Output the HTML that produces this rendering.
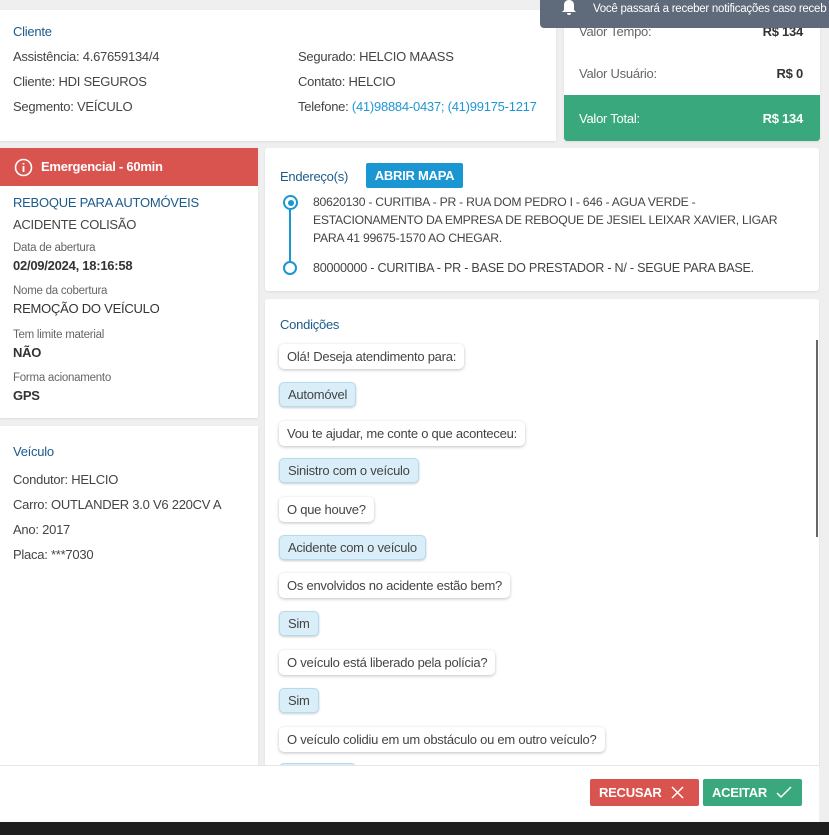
<!DOCTYPE html>
<html><head><meta charset="utf-8"><style>
*{box-sizing:border-box;margin:0;padding:0}
body{width:829px;height:835px;background:#efefef;font-family:"Liberation Sans",sans-serif;font-size:13px;letter-spacing:-0.25px;color:#444;position:relative;overflow:hidden}
.card{position:absolute;background:#fff;box-shadow:0 1px 2px rgba(0,0,0,.08)}
.t{position:absolute;white-space:nowrap}
.h{color:#1c5b8a}
.lnk{color:#1f97d4}
.lbl{font-size:11.5px;color:#666}
.b{color:#333}
.bub{position:absolute;left:279px;height:25px;line-height:25px;padding:0 8px;border-radius:5px;background:#fff;box-shadow:0 1px 3px rgba(0,0,0,.25);color:#444;white-space:nowrap}
.u{background:#d9eef8;box-shadow:0 1px 2px rgba(0,0,0,.2);border:1px solid #b4dcee;line-height:23px}
.btn{position:absolute;height:27px;top:779px;color:#fff;font-weight:bold;line-height:27px;padding-left:9px;border-radius:2px;font-size:13px}
</style></head><body>
<div class="card" style="left:0;top:10px;width:556px;height:131px">
<div class="t h" style="left:13px;top:14px">Cliente</div>
<div class="t" style="left:13px;top:39px">Assistência: 4.67659134/4</div>
<div class="t" style="left:13px;top:64px">Cliente: HDI SEGUROS</div>
<div class="t" style="left:13px;top:89px">Segmento: VEÍCULO</div>
<div class="t" style="left:298px;top:39px">Segurado: HELCIO MAASS</div>
<div class="t" style="left:298px;top:64px">Contato: HELCIO</div>
<div class="t" style="left:298px;top:89px">Telefone: <span class="lnk">(41)98884-0437; (41)99175-1217</span></div>
</div>
<div class="card" style="left:564px;top:10px;width:256px;height:131px">
<div class="t" style="left:15px;top:14px;color:#666">Valor Tempo:</div>
<div class="t" style="right:17px;top:14px;font-weight:bold;color:#333">R$ 134</div>
<div class="t" style="left:15px;top:56px;color:#666">Valor Usuário:</div>
<div class="t" style="right:17px;top:56px;font-weight:bold;color:#333">R$ 0</div>
<div style="position:absolute;left:0;top:85px;width:256px;height:46px;background:#39a97d;border-radius:0 0 3px 3px"></div>
<div class="t" style="left:15px;top:101px;color:#fff">Valor Total:</div>
<div class="t" style="right:17px;top:101px;color:#fff;font-weight:bold">R$ 134</div>
</div>
<div style="position:absolute;left:540px;top:0;width:289px;height:28px;background:#5f6b7a;border-radius:0 0 0 4px;color:#fff;font-size:11.5px">
<svg style="position:absolute;left:22px;top:0" width="14" height="16" viewBox="0 0 14 16"><path d="M7 0c-3 0-5 2-5 5v5l-2 2h14l-2-2V5c0-3-2-5-5-5zM5 13h4a2 2 0 0 1-4 0z" fill="#fff"/></svg>
<div class="t" style="left:53px;top:3px">Você passará a receber notificações caso receb</div></div>

<div class="card" style="left:0;top:148px;width:258px;height:270px">
<div style="position:absolute;left:0;top:0;width:258px;height:38px;background:#d9534f"></div>
<svg style="position:absolute;left:14px;top:10px" width="19" height="19" viewBox="0 0 19 19"><circle cx="9.5" cy="9.5" r="8" fill="none" stroke="#fff" stroke-width="1.6"/><path d="M9.5 8v6M9.5 5v1.5" stroke="#fff" stroke-width="1.8"/></svg>
<div class="t" style="left:41px;top:11px;color:#fff;font-weight:bold">Emergencial - 60min</div>
<div class="t h" style="left:13px;top:47px">REBOQUE PARA AUTOMÓVEIS</div>
<div class="t" style="left:13px;top:69px">ACIDENTE COLISÃO</div>
<div class="t lbl" style="left:13px;top:94px">Data de abertura</div>
<div class="t b" style="left:13px;top:110px;font-weight:bold">02/09/2024, 18:16:58</div>
<div class="t lbl" style="left:13px;top:137px">Nome da cobertura</div>
<div class="t b" style="left:13px;top:153px">REMOÇÃO DO VEÍCULO</div>
<div class="t lbl" style="left:13px;top:181px">Tem limite material</div>
<div class="t b" style="left:13px;top:197px;font-weight:bold">NÃO</div>
<div class="t lbl" style="left:13px;top:224px">Forma acionamento</div>
<div class="t b" style="left:13px;top:240px;font-weight:bold">GPS</div>
</div>
<div class="card" style="left:0;top:426px;width:258px;height:340px">
<div class="t h" style="left:13px;top:18px">Veículo</div>
<div class="t" style="left:13px;top:46px">Condutor: HELCIO</div>
<div class="t" style="left:13px;top:71px">Carro: OUTLANDER 3.0 V6 220CV A</div>
<div class="t" style="left:13px;top:96px">Ano: 2017</div>
<div class="t" style="left:13px;top:121px">Placa: ***7030</div>
</div>

<div class="card" style="left:265px;top:148px;width:554px;height:143px;border-radius:3px">
<div class="t h" style="left:15px;top:21px">Endereço(s)</div>
<div style="position:absolute;left:101px;top:15px;width:97px;height:25px;background:#1a96d3;border-radius:2px;color:#fff;font-weight:bold;line-height:25px;text-align:center">ABRIR MAPA</div>
<div style="position:absolute;left:24px;top:56px;width:2px;height:62px;background:#1a96d3"></div>
<div style="position:absolute;left:18px;top:47px;width:15px;height:15px;border:2px solid #1a96d3;border-radius:50%;background:#fff"><div style="position:absolute;left:2.5px;top:2.5px;width:6px;height:6px;border-radius:50%;background:#1a96d3"></div></div>
<div style="position:absolute;left:18px;top:113px;width:14px;height:14px;border:2px solid #1a96d3;border-radius:50%;background:#fff"></div>
<div style="position:absolute;left:48px;top:45px;width:505px;line-height:18px;font-size:12.2px;white-space:nowrap">80620130 - CURITIBA - PR - RUA DOM PEDRO I - 646 - AGUA VERDE -<br>ESTACIONAMENTO DA EMPRESA DE REBOQUE DE JESIEL LEIXAR XAVIER, LIGAR<br>PARA 41 99675-1570 AO CHEGAR.</div>
<div class="t" style="left:48px;top:113px;font-size:12.6px">80000000 - CURITIBA - PR - BASE DO PRESTADOR - N/ - SEGUE PARA BASE.</div>
</div>

<div class="card" style="left:265px;top:299px;width:554px;height:470px;border-radius:3px"></div>
<div class="t h" style="left:280px;top:317px">Condições</div>
<div style="position:absolute;left:816px;top:340px;width:2px;height:197px;background:#666"></div>
<div class="bub" style="top:344px">Olá! Deseja atendimento para:</div>
<div class="bub u" style="top:382px">Automóvel</div>
<div class="bub" style="top:421px">Vou te ajudar, me conte o que aconteceu:</div>
<div class="bub u" style="top:458px">Sinistro com o veículo</div>
<div class="bub" style="top:497px">O que houve?</div>
<div class="bub u" style="top:535px">Acidente com o veículo</div>
<div class="bub" style="top:573px">Os envolvidos no acidente estão bem?</div>
<div class="bub u" style="top:611px">Sim</div>
<div class="bub" style="top:650px">O veículo está liberado pela polícia?</div>
<div class="bub u" style="top:688px">Sim</div>
<div class="bub" style="top:727px">O veículo colidiu em um obstáculo ou em outro veículo?</div>
<div class="bub u" style="top:763px;width:77px"></div>

<div style="position:absolute;left:0;top:765px;width:819px;height:57px;background:#fff;border-top:1px solid #e6e6e6"></div>
<div class="btn" style="left:590px;width:109px;background:#d9534f">RECUSAR
<svg style="position:absolute;right:15px;top:7px" width="13" height="13"><path d="M1 1l11 11M12 1L1 12" stroke="#fff" stroke-width="1.5"/></svg></div>
<div class="btn" style="left:703px;width:99px;background:#39a97d">ACEITAR
<svg style="position:absolute;right:10px;top:7px" width="16" height="13"><path d="M1 7l4 4 10-10" stroke="#fff" stroke-width="1.5" fill="none"/></svg></div>
<div style="position:absolute;left:0;top:822px;width:829px;height:13px;background:#1f1f1f"></div>
</body></html>
